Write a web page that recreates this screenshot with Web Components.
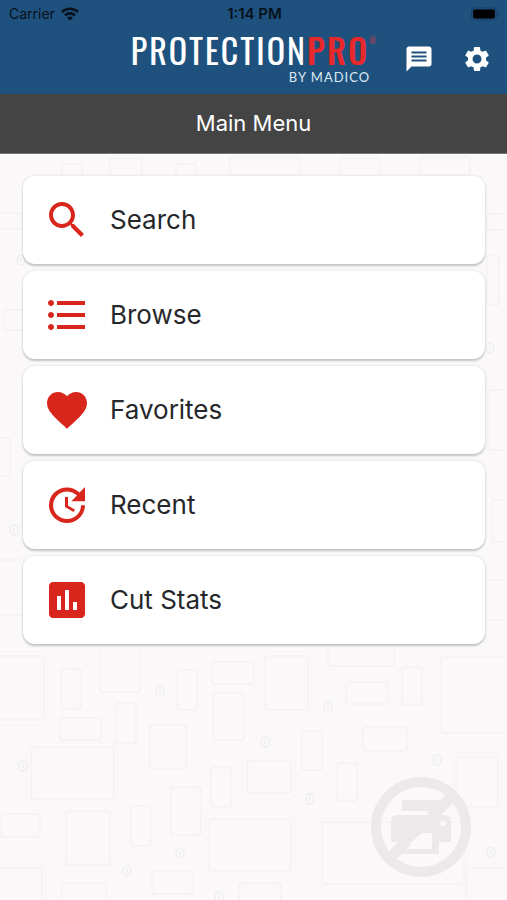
<!DOCTYPE html>
<html lang="en">
<head>
<meta charset="utf-8">
<meta name="viewport" content="width=device-width, initial-scale=1">
<title>ProtectionPro</title>
<style>
html, body { margin: 0; min-height: 100%; }
body { font-family: Inter, "Liberation Sans", sans-serif; color: #26272a; background: #faf8f9; }
</style>
</head>
<body>
<pp-app>
  <pp-status-bar slot="top" carrier="Carrier" time="1:14 PM"></pp-status-bar>
  <pp-toolbar slot="top">
    <pp-icon-button slot="action" icon="message" label="Messages"></pp-icon-button>
    <pp-icon-button slot="action" icon="settings" label="Settings"></pp-icon-button>
  </pp-toolbar>
  <pp-title slot="top">Main Menu</pp-title>
  <pp-menu-card icon="search">Search</pp-menu-card>
  <pp-menu-card icon="list">Browse</pp-menu-card>
  <pp-menu-card icon="heart">Favorites</pp-menu-card>
  <pp-menu-card icon="recent">Recent</pp-menu-card>
  <pp-menu-card icon="stats">Cut Stats</pp-menu-card>
  <pp-cutter-status slot="floating"></pp-cutter-status>
</pp-app>
<script>
const icons = {
  message: '<path fill-rule="evenodd" d="M20 2H4c-1.100 0-1.990.9-1.990 2L2 22l4-4h14c1.100 0 2-.9 2-2V4c0-1.100-.9-2-2-2zM18 14H6v-1.600h12V14zm0-3.200H6V9.200h12v1.600zm0-3.200H6V6h12v1.600z"/>',
  settings: '<path d="M19.140 12.940c.04-.3.06-.61.06-.94 0-.32-.02-.64-.07-.94l2.030-1.580c.18-.14.23-.41.12-.61l-1.920-3.320c-.12-.22-.37-.29-.59-.22l-2.390.96c-.5-.38-1.030-.7-1.620-.94l-.36-2.540c-.04-.24-.24-.41-.48-.41h-3.840c-.24 0-.43.17-.47.41l-.36 2.540c-.59.24-1.130.57-1.620.94l-2.390-.96c-.22-.08-.47 0-.59.22L2.740 8.870c-.12.21-.08.47.12.61l2.030 1.580c-.05.3-.09.63-.09.94s.02.64.07.94l-2.030 1.580c-.18.14-.23.41-.12.61l1.920 3.320c.12.22.37.29.59.22l2.390-.96c.5.38 1.030.7 1.620.94l.36 2.540c.05.24.24.41.48.41h3.840c.24 0 .44-.17.47-.41l.36-2.540c.59-.24 1.130-.56 1.620-.94l2.390.96c.22.08.47 0 .59-.22l1.920-3.320c.12-.22.07-.47-.12-.61l-2.010-1.580zM12 15.600c-1.980 0-3.600-1.620-3.600-3.600s1.620-3.600 3.600-3.600 3.600 1.620 3.600 3.600-1.620 3.600-3.600 3.600z"/>',
  search: '<path d="M15.500 14h-.79l-.28-.27C15.410 12.590 16 11.110 16 9.500 16 5.910 13.090 3 9.500 3S3 5.910 3 9.500 5.910 16 9.500 16c1.610 0 3.090-.59 4.230-1.570l.27.28v.79l5 4.990L20.490 19l-4.990-5zm-6 0C7.010 14 5 11.990 5 9.500S7.010 5 9.500 5 14 7.010 14 9.500 11.990 14 9.500 14z"/>',
  list: '<path d="M4 10.500c-.83 0-1.500.67-1.500 1.500s.67 1.500 1.500 1.500 1.500-.67 1.500-1.500-.67-1.500-1.500-1.500zm0-6c-.83 0-1.500.67-1.500 1.500S3.170 7.500 4 7.500 5.500 6.830 5.500 6 4.830 4.500 4 4.500zm0 12c-.83 0-1.500.68-1.500 1.500s.68 1.500 1.500 1.500 1.500-.68 1.500-1.500-.67-1.500-1.500-1.500zM7 19h14v-2H7v2zm0-6h14v-2H7v2zm0-8v2h14V5H7z"/>',
  heart: '<path d="M12 21.350l-1.450-1.320C5.400 15.360 2 12.280 2 8.500 2 5.420 4.420 3 7.500 3c1.740 0 3.410.81 4.500 2.090C13.090 3.810 14.760 3 16.500 3 19.580 3 22 5.420 22 8.500c0 3.780-3.400 6.860-8.550 11.540L12 21.350z"/>',
  recent: '<path d="M21 10.120h-6.780l2.740-2.820c-2.730-2.700-7.150-2.800-9.880-.1-2.730 2.710-2.730 7.080 0 9.790 2.730 2.710 7.150 2.710 9.880 0C18.320 15.650 19 14.080 19 12.100h2c0 1.980-.88 4.550-2.640 6.290-3.510 3.480-9.210 3.480-12.720 0-3.500-3.470-3.530-9.110-.02-12.580 3.510-3.470 9.140-3.470 12.650 0L21 3v7.120zM12.500 8v4.250l3.500 2.080-.72 1.210L11 13V8h1.500z"/>',
  stats: '<path d="M19 3H5c-1.100 0-2 .9-2 2v14c0 1.100.9 2 2 2h14c1.100 0 2-.9 2-2V5c0-1.100-.9-2-2-2zM9 17H7v-7h2v7zm4 0h-2V7h2v10zm4 0h-2v-4h2v4z"/>'
};
const svg = name => `<svg viewBox="0 0 24 24" fill="currentColor" aria-hidden="true">${icons[name]}</svg>`;

function define(tag, render) {
  customElements.define(tag, class extends HTMLElement {
    connectedCallback() {
      if (this.shadowRoot) return;
      this.attachShadow({ mode: 'open' }).innerHTML = render(this);
    }
  });
}

define('pp-status-bar', el => `
<style>
:host { display: grid; grid-template-columns: 1fr auto 1fr; align-items: center; height: 28px; padding: 0 7px 0 9px; background: #1f517e; color: #06111c; font-size: 14px; line-height: 20px; }
.left { display: flex; align-items: center; gap: 6px; }
.left svg { width: 18px; height: 14px; }
.time { font-size: 15px; font-weight: 600; }
.battery { justify-self: end; width: 29px; height: 14px; }
</style>
<div class="left"><span>${el.getAttribute('carrier')}</span>
<svg viewBox="0 0 18 14" role="img" aria-label="Wi-Fi"><g fill="none" stroke="currentColor" stroke-width="2.600"><path d="M1 5a11.500 11.500 0 0 1 16 0"/><path d="M4 8.400a7.200 7.200 0 0 1 10 0"/></g><path fill="currentColor" d="M9 13.600 6 10.700a4.200 4.200 0 0 1 6 0z"/></svg></div>
<span class="time">${el.getAttribute('time')}</span>
<svg class="battery" viewBox="0 0 29 14" role="img" aria-label="Battery full"><rect x=".5" y="1" width="25" height="12" rx="3.500" fill="none" stroke="#173f65"/><rect x="2" y="2.500" width="22" height="9" rx="2" fill="#000"/><path d="M27 5v4c2-.8 2-3.200 0-4z" fill="#173f65"/></svg>`);

define('pp-toolbar', () => `
<style>
:host { box-sizing: border-box; display: grid; grid-template-columns: 1fr auto 1fr; align-items: center; height: 66px; padding: 0 6px 4px; background: #1f517e; color: #fff; }
pp-logo { grid-column: 2; }
.actions { display: flex; justify-content: flex-end; gap: 10px; }
</style>
<pp-logo></pp-logo>
<div class="actions"><slot name="action"></slot></div>`);

define('pp-logo', () => `
<style>
:host { display: flex; flex-direction: column; align-items: flex-end; }
.name { display: flex; align-items: flex-start; font: 34px/36px Oswald, "Roboto Condensed", sans-serif; letter-spacing: 2px; white-space: nowrap; }
.pro { color: #e8292b; font-weight: 500; }
.mark { color: #c23a4a; font-size: 8px; line-height: 16px; letter-spacing: 0; }
.by { font: 13px/18px Lato, sans-serif; letter-spacing: 1px; color: #dbe8f4; padding-right: 6px; }
</style>
<span class="name"><span>PROTECTION</span><span class="pro">PRO</span><span class="mark">®</span></span>
<span class="by">BY MADICO</span>`);

define('pp-icon-button', el => `
<style>
:host { display: block; }
button { display: grid; place-items: center; width: 48px; height: 48px; padding: 0; border: 0; border-radius: 50%; background: none; color: #fff; cursor: pointer; }
svg { width: 30px; height: 30px; }
</style>
<button type="button" aria-label="${el.getAttribute('label')}">${svg(el.getAttribute('icon'))}</button>`);

define('pp-title', () => `
<style>
:host { display: block; background: #444; border-bottom: 1px solid #777; color: #fff; }
h1 { margin: 0; padding: 15px 16px; font-size: 22px; line-height: 29px; font-weight: 400; text-align: center; }
</style>
<h1><slot></slot></h1>`);

define('pp-menu-card', el => `
<style>
:host { display: block; }
button { display: flex; align-items: center; gap: 19px; width: 100%; height: 88px; padding: 0 20px; border: 0; border-radius: 12px; background: #fff; box-shadow: 0 2px 2px #c6c4c5, 0 0 3px #dddbdc; color: inherit; font: 26px/32px Inter, "Liberation Sans", sans-serif; text-align: left; cursor: pointer; }
svg { flex: none; width: 48px; height: 48px; color: #d9261c; }
</style>
<button type="button">${svg(el.getAttribute('icon'))}<span><slot></slot></span></button>`);

define('pp-cutter-status', () => `
<style>
:host { display: block; }
button { display: block; width: 100px; height: 100px; padding: 0; border: 0; border-radius: 50%; background: none; color: #ebe9ea; cursor: pointer; }
svg { display: block; width: 100%; height: 100%; }
</style>
<button type="button" aria-label="Cutter not connected"><svg viewBox="0 0 100 100" aria-hidden="true">
<circle cx="50" cy="50" r="45" fill="none" stroke="currentColor" stroke-width="10"/>
<path d="M83 17 60 40M36 64 17 83" stroke="currentColor" stroke-width="11"/>
<path fill="currentColor" fill-rule="evenodd" d="M31 23h40L60 34H31zM26 38h47q7 0 7 7v20H68v12H31l-5-12h-6V45q0-7 6-7zM61 56H51L32 72h29zM72 43a3 3 0 1 0 .01 0z"/>
</svg></button>`);

/* Wallpaper of device outlines: [x, y, width, height] */
define('pp-wallpaper', () => {
  const devices = [
    [-8,656,52,64],[61,669,20,40],[60,718,41,22],[116,703,20,40],[100,640,40,52],[177,670,20,40],[150,725,36,44],
    [31,747,83,52],[1,814,39,23],[66,811,44,54],[131,806,20,40],[171,787,30,48],[211,767,20,40],[152,871,41,23],
    [212,662,42,22],[213,693,31,47],[209,819,82,52],[-8,868,50,40],[62,883,44,30],[265,656,43,54],[328,640,66,26],
    [346,682,42,22],[402,667,20,38],[441,657,80,76],[302,731,20,39],[363,727,44,24],[337,763,20,38],[247,761,44,32],
    [456,757,42,50],[322,822,142,62],[466,868,50,40],[239,883,42,30],
    [-6,213,29,16],[62,164,20,22],[176,164,20,22],[4,310,20,20],[-8,438,18,38],[-6,560,30,55],
    [487,214,24,16],[487,255,12,50],[488,390,30,60],[492,500,24,42],[484,580,40,40],[110,158,32,18],[230,157,70,18],[340,158,40,18],[420,157,50,18]
  ];
  const buttons = [[160,691],[23,766],[127,871],[180,853],[328,706],[265,742],[310,799],[437,760],[491,852],[219,897],[21,260],[490,348],[14,530]];
  return `
<style>
:host { display: block; overflow: hidden; }
svg { display: block; width: 100%; height: 100%; }
</style>
<svg viewBox="0 0 507 900" preserveAspectRatio="xMidYMax slice" fill="none" aria-hidden="true">
<g stroke="#f3f1f2" stroke-width="1.500">${devices.map(([x, y, w, h]) => `<rect x="${x}" y="${y}" width="${w}" height="${h}" rx="3"/>`).join('')}</g>
<g stroke="#f7f5f6">${devices.map(([x, y, w, h]) => w > 40 && h > 30 ? `<rect x="${x - 4}" y="${y - 4}" width="${w + 8}" height="${h + 10}" rx="4"/>` : '').join('')}</g>
<g stroke="#f0eeef" stroke-width="1.500">${buttons.map(([x, y]) => `<ellipse cx="${x}" cy="${y}" rx="4" ry="5"/><path d="M${x} ${y - 2}v4"/>`).join('')}</g>
</svg>`;
});

define('pp-app', () => `
<style>
:host { display: flex; flex-direction: column; position: relative; min-height: 100vh; }
pp-wallpaper { position: absolute; inset: 0; }
header { position: relative; }
nav { position: relative; display: flex; flex-direction: column; gap: 7px; padding: 22px 22px 22px 23px; }
.floating { position: absolute; right: 36px; bottom: 23px; }
</style>
<pp-wallpaper></pp-wallpaper>
<header><slot name="top"></slot></header>
<nav aria-label="Main menu"><slot></slot></nav>
<div class="floating"><slot name="floating"></slot></div>`);
</script>
</body>
</html>
